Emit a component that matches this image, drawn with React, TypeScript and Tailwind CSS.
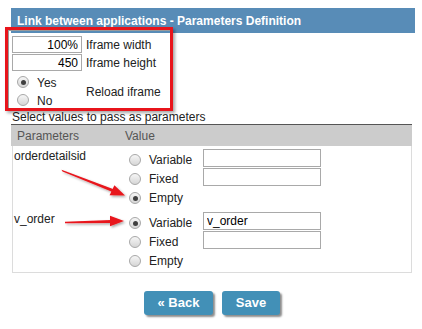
import React from 'react';

function Radio({ checked }: { checked?: boolean }) {
  return (
    <span className="flex h-[12px] w-[12px] shrink-0 items-center justify-center rounded-full border border-[#a8a8a8] bg-linear-to-b from-[#f6f6f6] to-[#d6d6d6]">
      {checked && <span className="h-[5px] w-[5px] rounded-full bg-[#404040]" />}
    </span>
  );
}

function TextBox({ value = '', className, right }: { value?: string; className: string; right?: boolean }) {
  return (
    <input
      readOnly
      value={value}
      className={`${className} border border-[#a9a9a9] bg-white px-[3px] text-[12px] text-black outline-none ${right ? 'text-right' : 'text-left'}`}
    />
  );
}

function Option({ label, checked, input }: { label: string; checked?: boolean; input?: string | null }) {
  return (
    <div className="flex h-[19px]">
      <div className="flex h-[19px] w-[77px] items-center gap-[8px] pl-[3px] pt-[3px]">
        <Radio checked={checked} />
        <span>{label}</span>
      </div>
      {input !== null && input !== undefined && <TextBox value={input} className="h-[18px] w-[118px]" />}
    </div>
  );
}

function ParamRow({ name, selected, value, className }: { name: string; selected: string; value: string; className?: string }) {
  return (
    <div className={`flex ${className ?? ''}`}>
      <div className="w-[113px] pl-[1px] leading-[14px]">{name}</div>
      <div className="flex flex-col">
        <Option label="Variable" checked={selected === 'Variable'} input={value} />
        <Option label="Fixed" checked={selected === 'Fixed'} input="" />
        <Option label="Empty" checked={selected === 'Empty'} input={null} />
      </div>
    </div>
  );
}

export default function App() {
  return (
    <div className="relative h-[329px] w-[422px] overflow-hidden bg-white font-['Liberation_Sans',Arial,sans-serif] text-[12px] leading-[14px] text-[#222]">
      {/* Title bar */}
      <div className="ml-[11px] mt-[8px] flex h-[25px] w-[404px] items-center bg-[#588cb7] pl-[6px] text-[12px] font-bold text-white">
        Link between applications - Parameters Definition
      </div>

      {/* Iframe settings */}
      <div className="ml-[12px] mt-[3px] flex flex-col gap-[1px]">
        <div className="flex items-center gap-[4px]">
          <TextBox value="100%" className="h-[17px] w-[70px]" right />
          <span>Iframe width</span>
        </div>
        <div className="flex items-center gap-[4px]">
          <TextBox value="450" className="h-[17px] w-[70px]" right />
          <span>Iframe height</span>
        </div>
      </div>
      <div className="ml-[12px] flex items-center gap-[4px] pt-[2px]">
        <div className="flex w-[70px] flex-col">
          <div className="flex h-[18px] items-center gap-[8px] pl-[5px]">
            <Radio checked />
            <span className="pt-[2px]">Yes</span>
          </div>
          <div className="flex h-[18px] items-center gap-[8px] pl-[5px]">
            <Radio />
            <span className="pt-[2px]">No</span>
          </div>
        </div>
        <span className="pt-[2px]">Reload iframe</span>
      </div>

      <div className="ml-[12px] mt-[1px] h-[14px]">Select values to pass as parameters</div>

      {/* Parameters table */}
      <div className="ml-[11px] w-[401px]">
        <div className="flex h-[22px] items-center border-t border-[#555] bg-[#cccccc] text-[#555]">
          <span className="w-[114px] pl-[6px]">Parameters</span>
          <span>Value</span>
        </div>
        <div className="ml-[1px] border-x border-b border-[#dcdcdc] pb-[3px] pt-[3px]">
          <ParamRow name="orderdetailsid" selected="Empty" value="" />
          <ParamRow name="v_order" selected="Variable" value="v_order" className="mt-[6px]" />
        </div>
      </div>

      {/* Buttons */}
      <div className="mt-[18px] flex justify-center gap-[9px] pl-[2px]">
        <button className="h-[24px] w-[69px] rounded-[3px] bg-[#4290b7] text-[13px] font-bold text-white shadow-[2px_2px_2px_rgba(0,0,0,0.45)]">
          « Back
        </button>
        <button className="h-[24px] w-[58px] rounded-[3px] bg-[#4290b7] text-[13px] font-bold text-white shadow-[2px_2px_2px_rgba(0,0,0,0.45)]">
          Save
        </button>
      </div>

      {/* Annotation: red box */}
      <div className="pointer-events-none absolute left-[5px] top-[27px] h-[84px] w-[168px] border-[3px] border-[#e8141b] shadow-[2px_2px_3px_rgba(0,0,0,0.35),inset_1px_1px_0_#9a9a9a]" />

      {/* Annotation: arrows */}
      <svg className="pointer-events-none absolute left-0 top-0" width="422" height="329">
        <defs>
          <filter id="sh" x="-20%" y="-20%" width="140%" height="140%">
            <feDropShadow dx="1.5" dy="1.5" stdDeviation="1" floodColor="#000" floodOpacity="0.35" />
          </filter>
        </defs>
        <g filter="url(#sh)" fill="#e8141b">
          <polygon points="61.5,169.8 62.5,171.6 112.6,191.9 113.6,189.2" />
          <polygon points="125,195.5 109.6,195.2 114.4,185.2" />
          <polygon points="65,221.8 65,223.2 111,222.9 111,220.1" />
          <polygon points="124,221 110,215.8 110,226.2" />
        </g>
      </svg>
    </div>
  );
}
